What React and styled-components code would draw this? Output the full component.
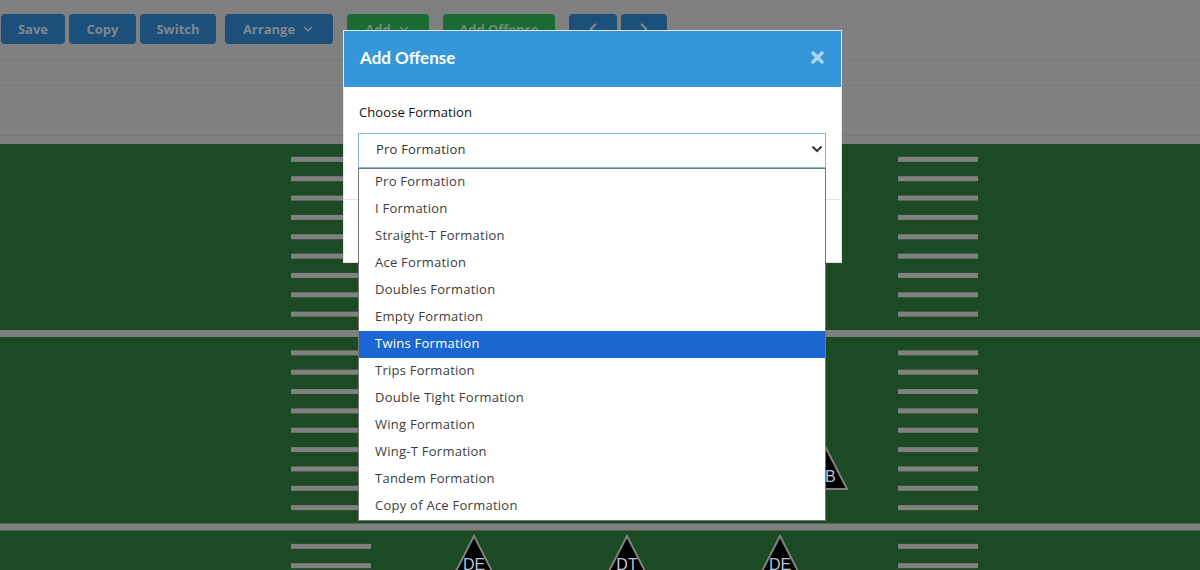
import React from "react";
import styled, { createGlobalStyle } from "styled-components";
import { ChevronDown, ChevronLeft, ChevronRight } from "lucide-react";

const GlobalStyle = createGlobalStyle`
    html, body {
        margin: 0;
        padding: 0;
    }
    body {
        width: 1200px;
        height: 570px;
        overflow: hidden;
        background: #808080;
        font-family: "Open Sans", "Liberation Sans", sans-serif;
    }
`;

const Page = styled.div`
    position: relative;
    width: 1200px;
    height: 570px;
    overflow: hidden;
`;

const TopArea = styled.div`
    height: 144px;
    background: #808080;
    display: flex;
    flex-direction: column;
`;

const Toolbar = styled.div`
    height: 60px;
    box-sizing: border-box;
    padding: 14px 0 0 1px;
    display: flex;
    align-items: flex-start;
    border-bottom: 1px solid #787878;
`;

const Row = styled.div`
    height: ${props => props.$h}px;
    box-sizing: border-box;
    border-bottom: 1px solid #787878;
`;

const Button = styled.div`
    width: ${props => props.$w}px;
    height: 30px;
    margin-left: ${props => props.$ml || 0}px;
    border-radius: 4px;
    background: ${props => (props.$green ? "#1a6a33" : "#1c4f79")};
    color: ${props => (props.$green ? "#6e8a76" : "#7e8993")};
    font-size: 13px;
    font-weight: 700;
    display: flex;
    align-items: center;
    justify-content: center;
    gap: 6px;
    box-sizing: border-box;
`;

const Field = styled.svg`
    display: block;
    background: #1c4a24;
`;

const Modal = styled.div`
    position: absolute;
    top: 30px;
    left: 343px;
    width: 499px;
    box-sizing: border-box;
    border: 1px solid #e4e4e4;
    background: #fff;
`;

const ModalHeader = styled.div`
    height: 56px;
    box-sizing: border-box;
    background: #3597da;
    display: flex;
    align-items: center;
    justify-content: space-between;
    padding: 0 17px 4px 16px;
`;

const ModalTitle = styled.h4`
    margin: 0;
    color: #fff;
    font-family: Lato, "Open Sans", sans-serif;
    font-size: 17px;
    font-weight: 700;
`;

const ModalBody = styled.div`
    padding: 16px 15px 31px 14px;
`;

const Label = styled.div`
    line-height: 18px;
    font-size: 13px;
    letter-spacing: 0.1px;
    color: #111;
    margin-bottom: 12px;
    padding-left: 1px;
`;

const SelectWrap = styled.div`
    position: relative;
`;

const SelectBox = styled.div`
    height: 35px;
    box-sizing: border-box;
    border: 1px solid #7cb5e6;
    display: flex;
    align-items: center;
    justify-content: space-between;
    padding: 0 1px 3px 17px;
    font-size: 13px;
    letter-spacing: 0.2px;
    color: #333;
`;

const OptionList = styled.ul`
    position: absolute;
    top: 100%;
    left: 0;
    right: 0;
    margin: 0;
    padding: 0;
    list-style: none;
    background: #fff;
    border: 1px solid #767676;
    z-index: 2;
`;

const Option = styled.li`
    height: 27px;
    line-height: 25px;
    padding-left: 16px;
    font-size: 13px;
    letter-spacing: 0.25px;
    color: ${props => (props.$active ? "#fff" : "#3d3d3d")};
    background: ${props => (props.$active ? "#1a67d2" : "transparent")};
`;

const ModalFooter = styled.div`
    height: 63px;
    box-sizing: border-box;
    border-top: 1px solid #e5e5e5;
`;

const formations = [
    "Pro Formation",
    "I Formation",
    "Straight-T Formation",
    "Ace Formation",
    "Doubles Formation",
    "Empty Formation",
    "Twins Formation",
    "Trips Formation",
    "Double Tight Formation",
    "Wing Formation",
    "Wing-T Formation",
    "Tandem Formation",
    "Copy of Ace Formation"
];

// field geometry, y relative to the top of the field
const STEP = 19.35;
const YARD = 189.5;
const marks = [];
for (let k = -9; k <= 12; k++) {
    if (k === 0 || k === 10) continue;
    marks.push(YARD + STEP * k);
}

const players = [
    { x: 474, y: 392, label: "DE" },
    { x: 627, y: 392, label: "DT" },
    { x: 780, y: 392, label: "DE" },
    { x: 826, y: 304, label: "LB" }
];

const FootballField = () => (
    <Field width="1200" height="426" viewBox="0 0 1200 426">
        {[YARD, YARD + STEP * 10].map(y => (
            <rect key={y} x="0" y={y - 3.5} width="1200" height="7" fill="#808080" />
        ))}
        {marks.map(y => (
            <g key={y}>
                <rect x="291" y={y - 2.5} width="80" height="5" fill="#808080" />
                <rect x="898" y={y - 2.5} width="80" height="5" fill="#808080" />
            </g>
        ))}
        {players.map(p => (
            <g key={p.x}>
                <polygon
                    points={`${p.x},${p.y} ${p.x - 21},${p.y + 41} ${p.x + 21},${p.y + 41}`}
                    fill="#000"
                    stroke="#808080"
                    strokeWidth="2"
                />
                <text
                    x={p.x}
                    y={p.y + 34}
                    textAnchor="middle"
                    fontFamily="Liberation Sans, sans-serif"
                    fontSize="16"
                    fill="#b8c2d4"
                >
                    {p.label}
                </text>
            </g>
        ))}
    </Field>
);

const CloseIcon = () => (
    <svg width="13" height="13" viewBox="0 0 13 13">
        <path d="M2 2 L11 11 M11 2 L2 11" stroke="rgba(255,255,255,0.6)" strokeWidth="3.4" strokeLinecap="round" />
    </svg>
);

const SelectArrow = () => (
    <svg width="14" height="10" viewBox="0 0 14 10">
        <polyline points="2.5,2.5 7,7 11.5,2.5" fill="none" stroke="#3a3a3a" strokeWidth="2.2" />
    </svg>
);

const App = () => {
    return (
        <Page>
            <GlobalStyle />
            <TopArea>
                <Toolbar>
                    <Button $w={64}>Save</Button>
                    <Button $w={67} $ml={4}>Copy</Button>
                    <Button $w={76} $ml={4}>Switch</Button>
                    <Button $w={108} $ml={9}>
                        Arrange <ChevronDown size={14} strokeWidth={2.6} />
                    </Button>
                    <Button $w={82} $ml={14} $green>
                        Add <ChevronDown size={14} strokeWidth={2.6} />
                    </Button>
                    <Button $w={112} $ml={14} $green>Add Offense</Button>
                    <Button $w={48} $ml={14}>
                        <ChevronLeft size={18} strokeWidth={3} />
                    </Button>
                    <Button $w={46} $ml={4}>
                        <ChevronRight size={18} strokeWidth={3} />
                    </Button>
                </Toolbar>
                <Row $h={26} />
                <Row $h={50} />
            </TopArea>
            <FootballField />

            <Modal>
                <ModalHeader>
                    <ModalTitle>Add Offense</ModalTitle>
                    <CloseIcon />
                </ModalHeader>
                <ModalBody>
                    <Label>Choose Formation</Label>
                    <SelectWrap>
                        <SelectBox>
                            Pro Formation
                            <SelectArrow />
                        </SelectBox>
                        <OptionList>
                            {formations.map(f => (
                                <Option key={f} $active={f === "Twins Formation"}>
                                    {f}
                                </Option>
                            ))}
                        </OptionList>
                    </SelectWrap>
                </ModalBody>
                <ModalFooter />
            </Modal>
        </Page>
    );
};

export default App;
